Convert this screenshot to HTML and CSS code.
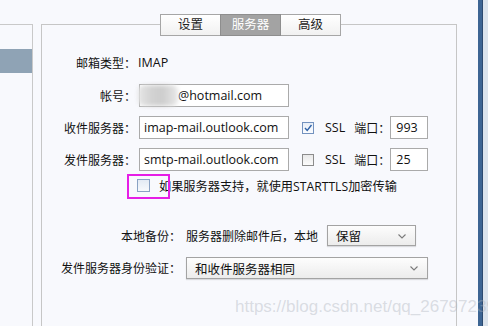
FILE: index.html
```html
<!DOCTYPE html>
<html lang="zh-CN">
<head>
    <meta charset="UTF-8">
    <title>服务器设置</title>
    <link rel="stylesheet" href="styles.css">
</head>
<body>
<div class="window">
    <aside class="sidebar">
        <div class="side-item"></div>
        <div class="side-item active"></div>
    </aside>

    <section class="panel">
        <nav class="tabs">
            <span class="tab">设置</span>
            <span class="tab active">服务器</span>
            <span class="tab">高级</span>
        </nav>

        <div class="form">
            <div class="row first">
                <span class="label">邮箱类型<span class="colon">：</span></span>
                <span class="value">IMAP</span>
            </div>
            <div class="row">
                <span class="label">帐号<span class="colon">：</span></span>
                <span class="field"><span class="blur"></span>@hotmail.com</span>
            </div>
            <div class="row">
                <span class="label">收件服务器<span class="colon">：</span></span>
                <span class="field">imap-mail.outlook.com</span>
                <span class="check checked">
                    <svg width="10" height="10" viewBox="0 0 10 10"><polyline points="2,5 4.2,7.5 8.5,2" fill="none" stroke="#2f62a8" stroke-width="1.4"/></svg>
                </span>
                <span class="ssl">SSL</span>
                <span class="port-label">端口<span class="colon">：</span></span>
                <span class="field port">993</span>
            </div>
            <div class="row">
                <span class="label">发件服务器<span class="colon">：</span></span>
                <span class="field">smtp-mail.outlook.com</span>
                <span class="check"></span>
                <span class="ssl">SSL</span>
                <span class="port-label">端口<span class="colon">：</span></span>
                <span class="field port">25</span>
            </div>
            <div class="row tls">
                <span class="check tls-check"></span>
                <span class="tls-text">如果服务器支持<span class="colon">，</span>就使用STARTTLS加密传输</span>
                <span class="highlight"></span>
            </div>
            <div class="row backup">
                <span class="label wide">本地备份<span class="colon">：</span></span>
                <span class="note">服务器删除邮件后<span class="colon">，</span>本地</span>
                <span class="select short">保留
                    <svg class="chev" width="8" height="5" viewBox="0 0 8 5"><polyline points="0.5,0.5 4,4 7.5,0.5" fill="none" stroke="#7a7a7a" stroke-width="1.1"/></svg>
                </span>
            </div>
            <div class="row auth">
                <span class="label wide">发件服务器身份验证<span class="colon">：</span></span>
                <span class="select long">和收件服务器相同
                    <svg class="chev" width="8" height="5" viewBox="0 0 8 5"><polyline points="0.5,0.5 4,4 7.5,0.5" fill="none" stroke="#7a7a7a" stroke-width="1.1"/></svg>
                </span>
            </div>
        </div>
    </section>

    <div class="scrollbar"></div>
</div>
<div class="watermark">https://blog.csdn.net/qq_26797239</div>
</body>
</html>
```

FILE: styles.css
```css
body {
    margin: 0;
    height: 100vh;
    overflow: hidden;
    background-color: #f8f9fd;
    font-family: "Open Sans", "Noto Sans CJK SC", sans-serif;
    font-size: 12px;
    color: #111;
    position: relative;
}
.window {
    display: flex;
    height: 100%;
}
.sidebar {
    width: 32px;
    margin-top: 24px;
    border-top: 1px solid #c9c9c9;
    border-right: 1px solid #c9c9c9;
}
.side-item {
    height: 24px;
}
.side-item.active {
    background-color: #8fa3b5;
}
.panel {
    box-sizing: border-box;
    width: 416px;
    height: 400px;
    margin-top: 24px;
    margin-left: 8px;
    border: 1px solid #c6c6c6;
}
.tabs {
    display: flex;
    margin-top: -11px;
    margin-left: 118px;
}
.tab {
    box-sizing: border-box;
    width: 61px;
    height: 22px;
    line-height: 20px;
    text-align: center;
    border: 1px solid #a6a6a6;
    background: linear-gradient(#ffffff, #f1f1f1);
    color: #222;
    font-size: 12.5px;
}
.tab + .tab {
    margin-left: -1px;
}
.tab.active {
    background: #a3a3a3;
    border-color: #8e8e8e;
    color: #fff;
    position: relative;
}
.form {
    display: flex;
    flex-direction: column;
}
.row {
    display: flex;
    align-items: center;
    height: 23px;
    margin-top: 9px;
    position: relative;
}
.row.first {
    margin-top: 15px;
    margin-bottom: 1px;
}
/* centred full-width punctuation, as in the original UI font */
.colon {
    font-family: "Noto Sans CJK TC", "Noto Sans CJK SC", sans-serif;
}
.label {
    width: 94px;
    text-align: right;
    margin-right: 3px;
    white-space: nowrap;
}
.label.wide {
    width: 139px;
    margin-right: 5px;
}
.value {
    font-size: 12.5px;
    margin-left: -1px;
}
.field {
    box-sizing: border-box;
    width: 150px;
    height: 23px;
    line-height: 21px;
    padding-left: 4px;
    border: 1px solid #aaaaaa;
    background-color: #fff;
    font-size: 12.5px;
    white-space: nowrap;
    position: relative;
}
.field.port {
    width: 38px;
    padding-left: 5px;
}
.blur {
    display: inline-block;
    width: 40px;
    height: 21px;
    margin-left: -6px;
    vertical-align: top;
    background: linear-gradient(90deg, #e6e6e6, #d2d2d2 35%, #cdcdcd 60%, #e8e8e8);
    border-radius: 6px;
    filter: blur(2px);
}
.check {
    box-sizing: border-box;
    width: 12px;
    height: 12px;
    margin-left: 13px;
    border: 1px solid #8c8c8c;
    background: linear-gradient(#e9e9e9, #fbfbfb);
    display: flex;
    align-items: center;
    justify-content: center;
}
.check.checked {
    border-color: #7392bf;
    background: linear-gradient(#e8eef7, #fbfcfe);
}
.ssl {
    margin-left: 11px;
    font-size: 12.5px;
}
.port-label {
    margin-left: 9px;
    width: 36px;
    white-space: nowrap;
}
.row.tls {
    height: 21px;
    margin-top: 4px;
}
.check.tls-check {
    width: 13px;
    height: 13px;
    margin-left: 95px;
    border-color: #8aa2c4;
    background: linear-gradient(#e3eaf4, #f7f9fc);
}
.tls-text {
    margin-left: 9px;
    font-size: 12.2px;
}
.highlight {
    position: absolute;
    left: 85px;
    top: -1px;
    width: 43px;
    height: 25px;
    box-sizing: border-box;
    border: 2px solid #e61ee6;
}
.row.backup {
    height: 21px;
    margin-top: 29px;
}
.note {
    white-space: nowrap;
}
.select {
    box-sizing: border-box;
    height: 21px;
    padding-left: 8px;
    border: 1px solid #a3a3a3;
    background: linear-gradient(#fdfdfd, #ececec);
    box-shadow: 0 1px 1px rgba(0, 0, 0, 0.12);
    display: flex;
    align-items: center;
    justify-content: space-between;
    padding-right: 9px;
    font-size: 12.5px;
}
.select.short {
    width: 89px;
    margin-left: 9px;
}
.select.long {
    width: 242px;
    height: 22px;
}
.row.auth {
    height: 22px;
    margin-top: 11px;
}
.chev {
    margin-top: 1px;
}
.scrollbar {
    margin-left: auto;
    width: 4px;
    background-color: #3d6593;
    border-right: 1px solid #2c4a70;
    box-shadow: 5px 0 0 #dbe3ec;
    margin-right: 5px;
}
.watermark {
    position: absolute;
    left: 235px;
    top: 297px;
    font-family: "Liberation Sans", sans-serif;
    font-size: 17px;
    color: rgba(170, 175, 185, 0.4);
    white-space: nowrap;
}
```
